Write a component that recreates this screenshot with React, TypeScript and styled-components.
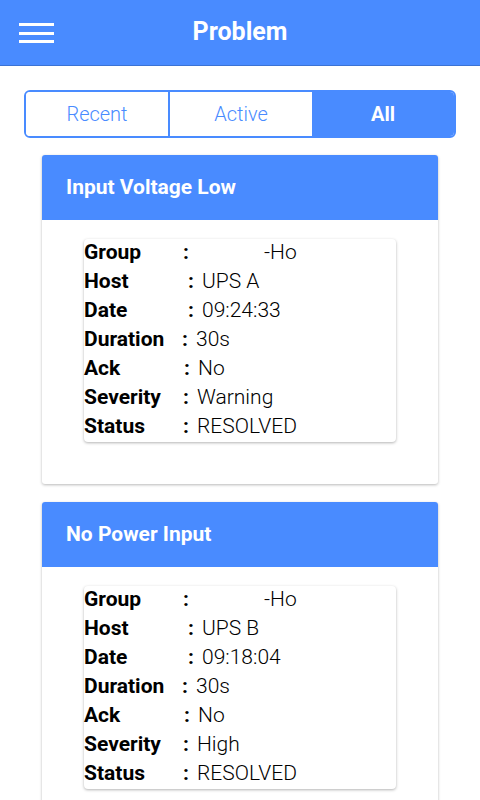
import React from "react";
import styled, { createGlobalStyle } from "styled-components";

const GlobalStyle = createGlobalStyle`
  html, body { margin: 0; padding: 0; background: #ffffff; }
  body { font-family: Roboto, "Noto Sans", "Liberation Sans", sans-serif; }
  * { box-sizing: border-box; }
`;

const BLUE = "#498bff";

const Page = styled.div`
  width: 480px;
  min-height: 800px;
  background: #fff;
`;

const Header = styled.header`
  position: relative;
  height: 66px;
  background: ${BLUE};
  border-bottom: 1px solid #3b73d4;
  display: flex;
  align-items: center;
  justify-content: center;
`;

const Menu = styled.button`
  position: absolute;
  left: 19px;
  top: 23px;
  width: 35px;
  height: 20px;
  padding: 0;
  border: none;
  background: transparent;
  display: flex;
  flex-direction: column;
  justify-content: space-between;
`;

const MenuLine = styled.span`
  display: block;
  width: 35px;
  height: 3px;
  background: #fff;
`;

const Title = styled.h1`
  margin: 0;
  color: #fff;
  font-size: 25px;
  font-weight: 700;
  line-height: 1;
  padding-bottom: 3px;
`;

const Tabs = styled.div`
  margin: 24px 24px 0;
  height: 48px;
  border: 2px solid ${BLUE};
  border-radius: 6px;
  display: flex;
  overflow: hidden;
`;

const Tab = styled.div<{ $active?: boolean; $divider?: boolean }>`
  flex: 1;
  display: flex;
  align-items: center;
  justify-content: center;
  font-size: 20px;
  font-weight: ${(p) => (p.$active ? 700 : 300)};
  color: ${(p) => (p.$active ? "#fff" : BLUE)};
  background: ${(p) => (p.$active ? BLUE : "#fff")};
  border-left: ${(p) => (p.$divider ? `2px solid ${BLUE}` : "none")};
`;

const List = styled.div`
  padding: 17px 42px 0;
  display: flex;
  flex-direction: column;
  gap: 18px;
`;

const Card = styled.section`
  background: #fff;
  border-radius: 3px;
  box-shadow: 0 1px 3px rgba(0, 0, 0, 0.28);
  padding-bottom: 42px;
`;

const CardHeader = styled.div`
  height: 65px;
  background: ${BLUE};
  border-radius: 3px 3px 0 0;
  display: flex;
  align-items: center;
  padding-left: 24px;
  padding-bottom: 2px;
  color: #fff;
  font-size: 21px;
  font-weight: 700;
`;

const Details = styled.div`
  margin: 19px 42px 0;
  background: #fff;
  border-radius: 4px;
  box-shadow: 0 1px 3px rgba(0, 0, 0, 0.3);
`;

const Row = styled.div`
  height: 29px;
  line-height: 29px;
  display: flex;
  align-items: center;
  font-size: 21px;
  color: #000;
  transform: translateY(-1px);
`;

const Label = styled.span<{ $colon: number }>`
  width: ${(p) => p.$colon}px;
  font-weight: 700;
  flex: none;
`;

const Colon = styled.span`
  width: 14px;
  font-weight: 700;
  flex: none;
`;

const Value = styled.span<{ $indent?: number }>`
  font-weight: 300;
  padding-left: ${(p) => p.$indent ?? 0}px;
  white-space: nowrap;
`;

type Field = { label: string; colon: number; indent?: number };

const fields: Field[] = [
  { label: "Group", colon: 99, indent: 67 },
  { label: "Host", colon: 104 },
  { label: "Date", colon: 104 },
  { label: "Duration", colon: 98 },
  { label: "Ack", colon: 100 },
  { label: "Severity", colon: 99 },
  { label: "Status", colon: 99 },
];

const problems = [
  {
    title: "Input Voltage Low",
    values: ["-Ho", "UPS A", "09:24:33", "30s", "No", "Warning", "RESOLVED"],
  },
  {
    title: "No Power Input",
    values: ["-Ho", "UPS B", "09:18:04", "30s", "No", "High", "RESOLVED"],
  },
];

export default function App() {
  return (
    <Page>
      <GlobalStyle />
      <Header>
        <Menu aria-label="menu">
          <MenuLine />
          <MenuLine />
          <MenuLine />
        </Menu>
        <Title>Problem</Title>
      </Header>
      <Tabs>
        <Tab>Recent</Tab>
        <Tab $divider>Active</Tab>
        <Tab $active>All</Tab>
      </Tabs>
      <List>
        {problems.map((p) => (
          <Card key={p.title}>
            <CardHeader>{p.title}</CardHeader>
            <Details>
              {fields.map((f, i) => (
                <Row key={f.label}>
                  <Label $colon={f.colon}>{f.label}</Label>
                  <Colon>:</Colon>
                  <Value $indent={f.indent}>{p.values[i]}</Value>
                </Row>
              ))}
            </Details>
          </Card>
        ))}
      </List>
    </Page>
  );
}
